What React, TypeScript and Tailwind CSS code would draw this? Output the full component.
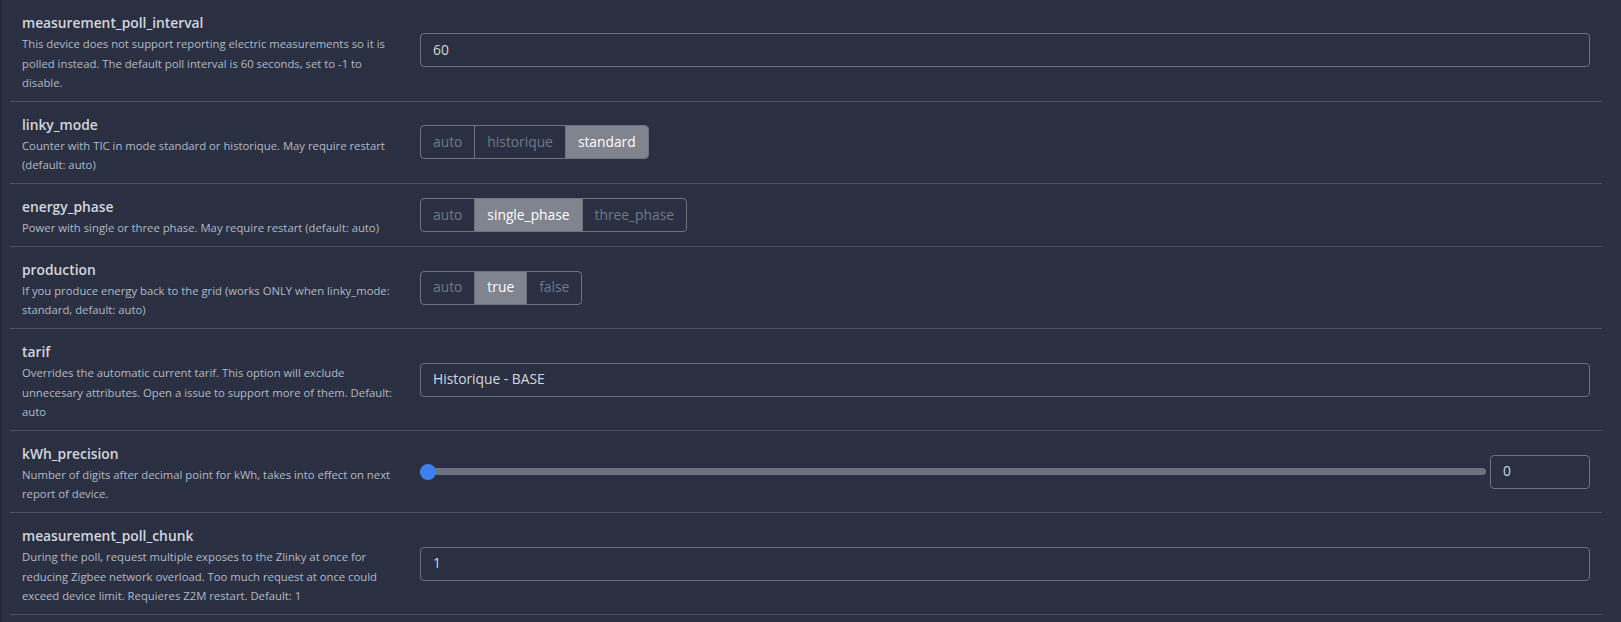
import React from 'react';

type Row = {
  name: string;
  desc: string;
  kind: 'text' | 'enum' | 'range';
  value?: string;
  options?: string[];
};

const rows: Row[] = [
  {
    name: 'measurement_poll_interval',
    desc: 'This device does not support reporting electric measurements so it is polled instead. The default poll interval is 60 seconds, set to -1 to disable.',
    kind: 'text',
    value: '60',
  },
  {
    name: 'linky_mode',
    desc: 'Counter with TIC in mode standard or historique. May require restart (default: auto)',
    kind: 'enum',
    options: ['auto', 'historique', 'standard'],
    value: 'standard',
  },
  {
    name: 'energy_phase',
    desc: 'Power with single or three phase. May require restart (default: auto)',
    kind: 'enum',
    options: ['auto', 'single_phase', 'three_phase'],
    value: 'single_phase',
  },
  {
    name: 'production',
    desc: 'If you produce energy back to the grid (works ONLY when linky_mode: standard, default: auto)',
    kind: 'enum',
    options: ['auto', 'true', 'false'],
    value: 'true',
  },
  {
    name: 'tarif',
    desc: 'Overrides the automatic current tarif. This option will exclude unnecesary attributes. Open a issue to support more of them. Default: auto',
    kind: 'text',
    value: 'Historique - BASE',
  },
  {
    name: 'kWh_precision',
    desc: 'Number of digits after decimal point for kWh, takes into effect on next report of device.',
    kind: 'range',
    value: '0',
  },
  {
    name: 'measurement_poll_chunk',
    desc: 'During the poll, request multiple exposes to the Zlinky at once for reducing Zigbee network overload. Too much request at once could exceed device limit. Requieres Z2M restart. Default: 1',
    kind: 'text',
    value: '1',
  },
];

const EnumGroup = ({ options, value }: { options: string[]; value?: string }) => (
  <div className="flex h-[34px] rounded border border-[#6c757d] overflow-hidden">
    {options.map((o, i) => (
      <div
        key={o}
        className={
          'flex items-center px-3 text-[13.8px] ' +
          (i > 0 ? 'border-l border-[#6c757d] ' : '') +
          (o === value ? 'bg-[#7f848e] text-white' : 'text-[#707987]')
        }
      >
        {o}
      </div>
    ))}
  </div>
);

const TextInput = ({ value, className }: { value?: string; className?: string }) => (
  <div
    className={
      'flex h-[34px] items-center rounded border border-[#6c727f] px-3 text-[13.8px] text-[#d3d7de] ' +
      (className || '')
    }
  >
    {value}
  </div>
);

const RangeInput = ({ value }: { value?: string }) => (
  <div className="flex w-full items-center gap-1">
    <div className="relative h-[7px] flex-1 rounded-full bg-[#6c727f]">
      <div className="absolute left-0 top-1/2 h-4 w-4 -translate-y-1/2 rounded-full bg-[#3d80ec]" />
    </div>
    <TextInput value={value} className="w-[100px]" />
  </div>
);

export default function App() {
  return (
    <div className="min-h-[622px] border-l-2 border-[#222735] bg-[#2a3042] pl-2 pr-[19px] font-['Segoe_UI','Open_Sans',sans-serif]">
      {rows.map(r => (
        <div key={r.name} className="flex border-b border-[#4b5162]">
          <div className="w-[398px] shrink-0 px-3 pt-3 pb-[8.3px]">
            <div className="text-[13.8px] font-semibold leading-[22px] text-[#d2d6dd]">{r.name}</div>
            <div className="text-[11.3px] leading-[19.5px] text-[#b3b9c4]">{r.desc}</div>
          </div>
          <div className="flex flex-1 items-center px-3">
            {r.kind === 'enum' && <EnumGroup options={r.options!} value={r.value} />}
            {r.kind === 'text' && <TextInput value={r.value} className="w-full" />}
            {r.kind === 'range' && <RangeInput value={r.value} />}
          </div>
        </div>
      ))}
    </div>
  );
}
